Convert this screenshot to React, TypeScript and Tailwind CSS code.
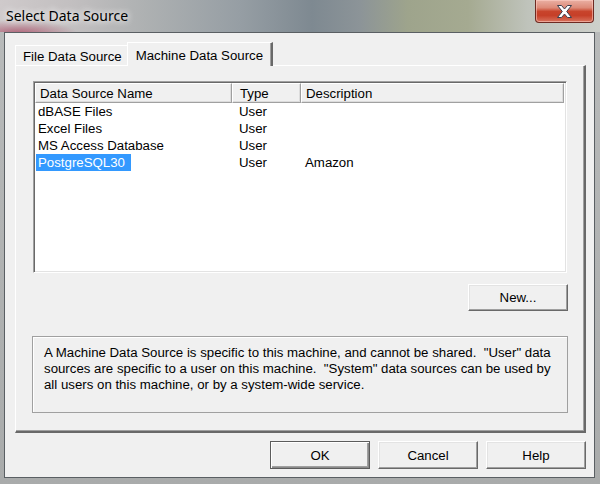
import React from "react";

const rows = [
  { name: "dBASE Files", type: "User", desc: "" },
  { name: "Excel Files", type: "User", desc: "" },
  { name: "MS Access Database", type: "User", desc: "" },
  { name: "PostgreSQL30", type: "User", desc: "Amazon", selected: true },
];

const btn =
  "flex items-center justify-center bg-[#f0f0f0] border border-t-white border-l-white border-r-[#696969] border-b-[#696969] shadow-[inset_-1px_-1px_0_#a0a0a0,inset_1px_1px_0_#e3e3e3] text-[13.25px] leading-[17px] text-black";

const btnDefault =
  "flex items-center justify-center bg-[#f0f0f0] border border-[#5c5c5c] shadow-[inset_1px_1px_0_#ffffff,inset_-1px_-1px_0_#8a8a8a,inset_-2px_-2px_0_#a0a0a0] text-[13.25px] leading-[17px] text-black";

const headCell =
  "h-full flex items-center border-t border-l border-t-white border-l-white border-r border-b border-r-[#a0a0a0] border-b-[#a0a0a0] shadow-[inset_-1px_-1px_0_#dcdcdc]";

export default function App() {
  return (
    <div className="w-[600px] h-[484px] flex flex-col overflow-hidden bg-[linear-gradient(180deg,#b9bbbb_0%,#a9abab_100%)] font-['Liberation_Sans',Arial,sans-serif] text-black">
      {/* Title bar */}
      <div className="h-[32px] flex items-start justify-between bg-[radial-gradient(60px_14px_at_18px_34px,rgba(170,80,105,0.85),transparent),linear-gradient(90deg,#cfcacb_0%,#c2bfc0_12%,#aeb1b2_24%,#969ea4_40%,#7e8991_52%,#8c9498_60%,#9ea48c_68%,#a5aa91_78%,#bfc3bb_88%,#cdd0cb_100%)]">
        <div className="pl-[6px] pt-[6px] text-[14px] leading-[20px] text-black font-['Noto_Sans',sans-serif] [text-shadow:0_0_6px_rgba(255,255,255,0.95),0_0_10px_rgba(255,255,255,0.8)]">
          Select Data Source
        </div>
        <div className="mr-[6px] w-[59px] h-[23px] flex items-center justify-center rounded-b-[4px] border border-t-0 border-[#6e2a22] bg-[linear-gradient(180deg,#eab0a4_0%,#dd8a78_35%,#c8442c_52%,#c63f28_70%,#d8735e_100%)] shadow-[inset_0_0_0_1px_rgba(255,210,200,0.55)]">
          <svg width="17" height="13" viewBox="0 0 17 13">
            <polygon
              points="1.5,0.5 5.5,0.5 8.5,4 11.5,0.5 15.5,0.5 10.7,6.5 15.5,12.5 11.5,12.5 8.5,9 5.5,12.5 1.5,12.5 6.3,6.5"
              fill="#ffffff"
              stroke="#3c3f4f"
              strokeWidth="1"
              strokeLinejoin="round"
            />
          </svg>
        </div>
      </div>

      {/* Client area */}
      <div className="ml-[4px] mr-[5px] mb-[6px] flex-1 flex flex-col border border-[#5a5f63] bg-[#f0f0f0]">
        {/* Tabs */}
        <div className="pt-[9px] pl-[10px] flex items-end">
          <div className="h-[20px] pl-[7px] pr-[5px] pt-[2px] text-[13.25px] leading-[17px] border-t border-l border-t-white border-l-white bg-[#f0f0f0]">
            File Data Source
          </div>
          <div className="relative z-10 -mb-[1px] h-[24px] pl-[8px] pr-[8px] pt-[4px] text-[13.25px] leading-[17px] bg-[#f0f0f0] border-t border-l border-t-white border-l-white border-r-2 border-r-[#696969] shadow-[inset_-1px_0_0_#a0a0a0]">
            Machine Data Source
          </div>
        </div>

        {/* Tab panel */}
        <div className="ml-[10px] w-[571px] h-[368px] flex flex-col px-[17px] border-t border-l border-t-white border-l-white border-r-2 border-b-2 border-r-[#696969] border-b-[#696969] shadow-[inset_-1px_-1px_0_#a0a0a0]">
          {/* List view */}
          <div className="mt-[15px] w-[534px] h-[192px] flex flex-col bg-white border border-t-[#a0a0a0] border-l-[#a0a0a0] border-r-white border-b-white shadow-[inset_1px_1px_0_#696969,inset_-1px_-1px_0_#e3e3e3] p-[1px]">
            <div className="h-[20px] flex text-[13.25px] leading-[17px] bg-[#f0f0f0]">
              <div className={`${headCell} w-[197px] pl-[4px]`}>Data Source Name</div>
              <div className={`${headCell} w-[69px] pl-[7px]`}>Type</div>
              <div className={`${headCell} w-[263px] pl-[4px]`}>Description</div>
              <div className="flex-1 bg-white" />
            </div>
            <div className="flex flex-col text-[13.25px] leading-[17px]">
              {rows.map((r) => (
                <div key={r.name} className="h-[17px] flex">
                  <div className="w-[197px] pl-[1px]">
                    <span
                      className={
                        r.selected
                          ? "inline-block h-[17px] pl-[2px] pr-[6px] bg-[#3399ff] text-white"
                          : "inline-block h-[17px] pl-[2px]"
                      }
                    >
                      {r.name}
                    </span>
                  </div>
                  <div className="w-[69px] pl-[7px]">{r.type}</div>
                  <div className="w-[263px] pl-[4px]">{r.desc}</div>
                </div>
              ))}
            </div>
          </div>

          {/* New button */}
          <div className="mt-[11px] flex justify-end -mr-[1px]">
            <div className={`${btn} w-[100px] h-[27px]`}>New...</div>
          </div>

          {/* Description group */}
          <div className="mt-[25px] -ml-[1px] w-[536px] h-[77px] border border-[#a0a0a0] shadow-[inset_1px_1px_0_#ffffff] pl-[11px] pt-[8px] text-[13.25px] leading-[16px]">
            <div className="whitespace-pre">A Machine Data Source is specific to this machine, and cannot be shared.  "User" data</div>
            <div className="whitespace-pre">sources are specific to a user on this machine.  "System" data sources can be used by</div>
            <div className="whitespace-pre">all users on this machine, or by a system-wide service.</div>
          </div>
        </div>

        {/* Bottom buttons */}
        <div className="mt-[8px] pr-[8px] flex justify-end gap-[8px]">
          <div className={`${btnDefault} w-[100px] h-[28px]`}>OK</div>
          <div className={`${btn} w-[100px] h-[28px]`}>Cancel</div>
          <div className={`${btn} w-[100px] h-[28px]`}>Help</div>
        </div>
      </div>
    </div>
  );
}
